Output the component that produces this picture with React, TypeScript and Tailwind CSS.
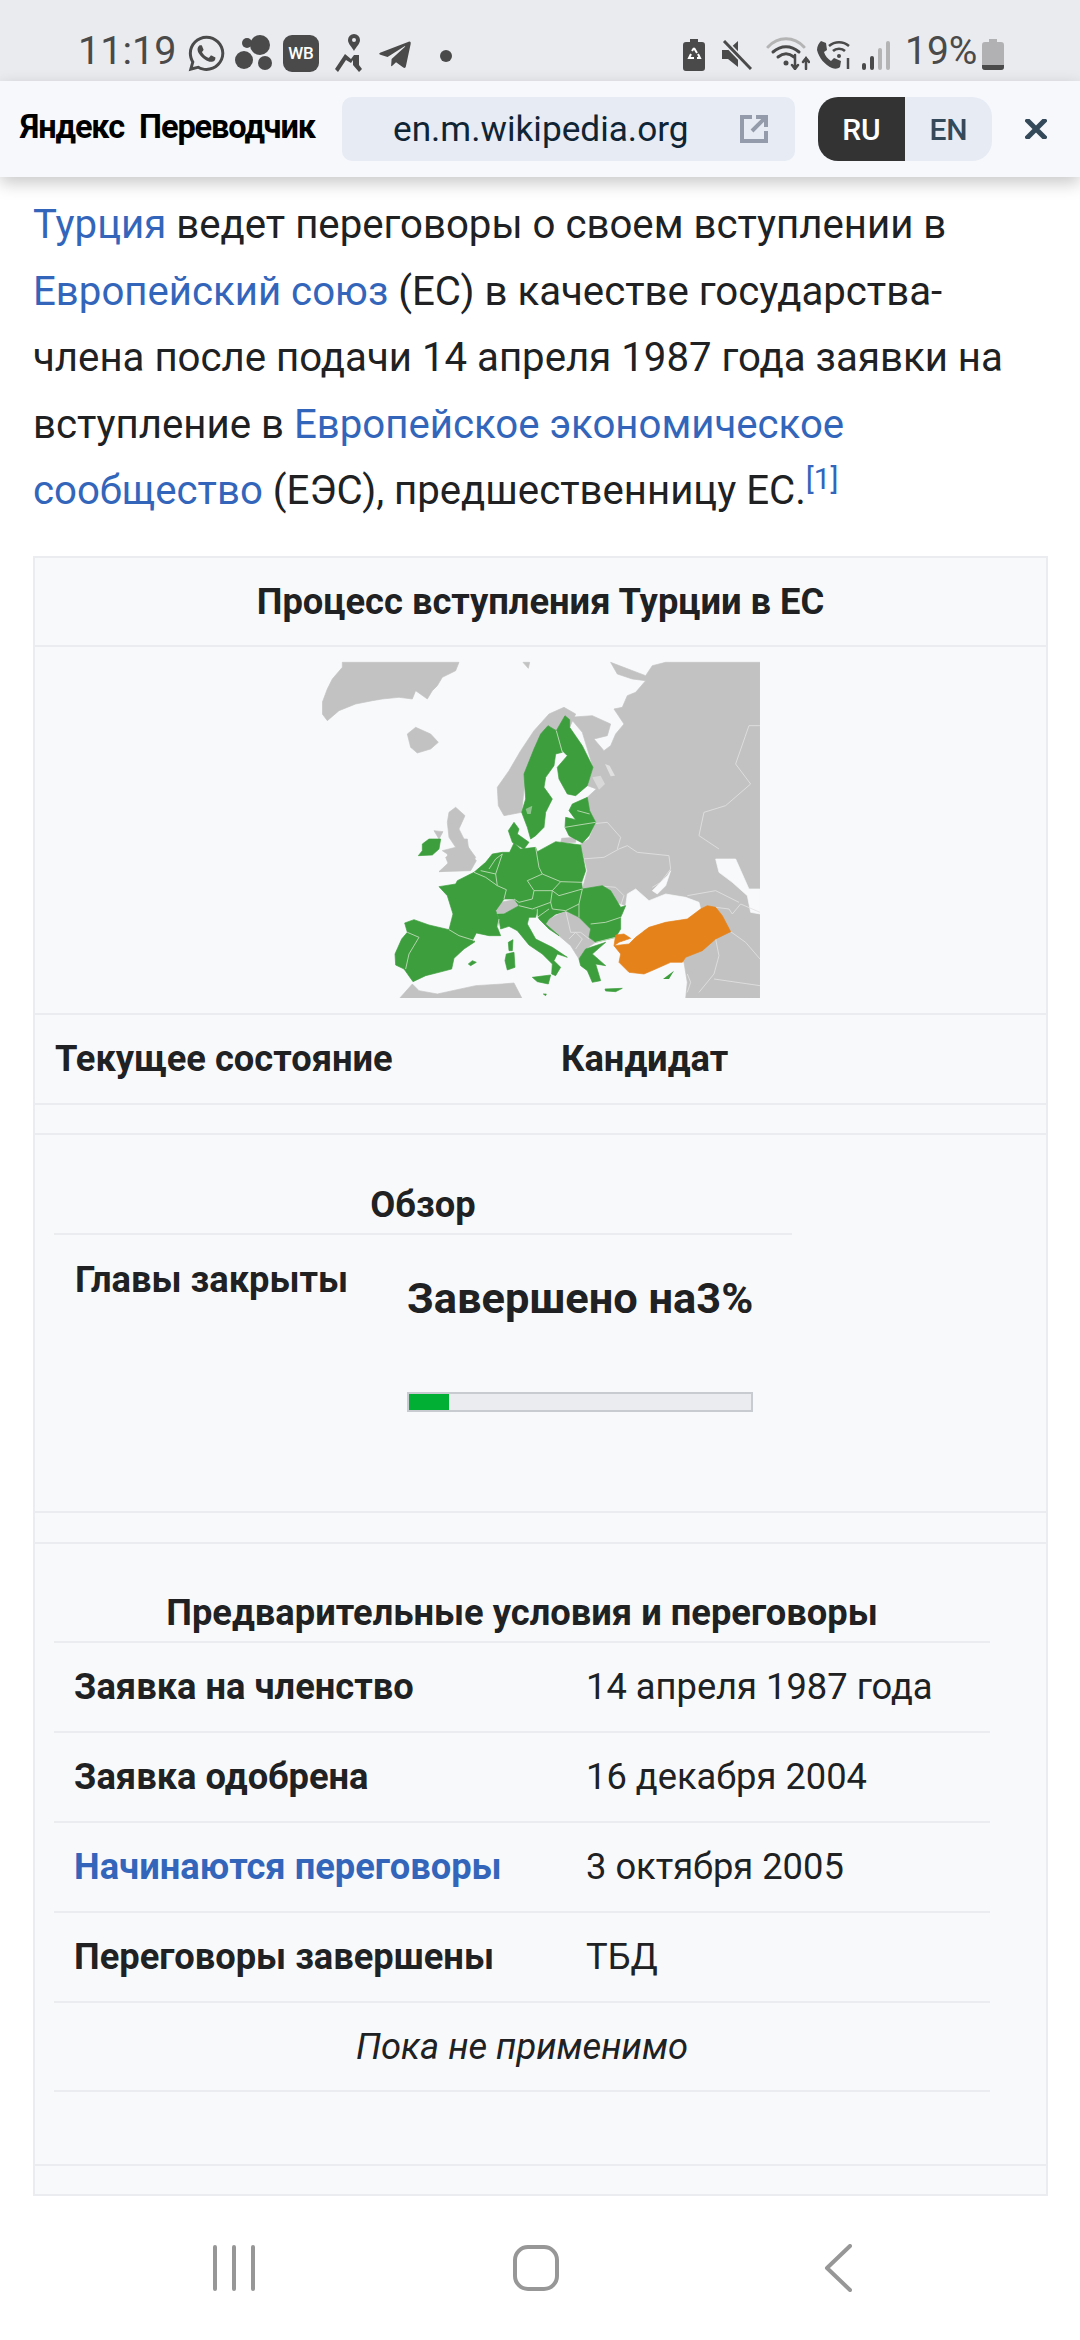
import { FaWhatsapp, FaTelegramPlane } from "react-icons/fa";

const SEA = "#f8f9fb";
const GRAY = "#c2c2c2";
const GREEN = "#3c9e3c";
const ORANGE = "#e5821a";

// outlines are written in the coordinates of the crop they were read from
const wholeLand = [
  "70,160 85,120 100,90 130,55 130,40 480,40 470,65 430,85 415,110 400,125 385,150 350,125 340,150 300,145 250,150 220,155 170,165 120,185 85,215 70,195",
  "325,255 350,235 395,255 418,280 395,300 355,312 335,295",
  "672,40 692,40 688,58",
  "935,40 955,75 1000,90 1040,95 1010,130 985,140 970,175 945,180 975,225 950,255 935,290 915,305 885,270 925,260 935,225 880,200 812,205 850,250 882,355 866,410 892,420 865,445 872,485 890,520 870,570 845,585 865,665 850,720 980,770 970,795 1100,900 1155,940 1165,1000 1160,1050 1383,1048 1383,40 1160,40 1100,40 1060,50 1040,80",
  "445,520 450,490 470,475 498,500 480,540 505,590 530,625 515,655 420,668 450,640 445,615 430,605 470,595 450,565",
  "405,545 432,548 420,570",
];

const eastLines = [
  "850,630 915,625 960,600 985,590 1015,610 1110,620 1115,660 1085,700 1060,715",
  "845,585 875,525 925,520 965,565 955,600",
  "1383,230 1350,230 1310,345 1355,405 1280,470 1215,490 1200,560 1260,600",
  "915,712 950,715 975,740 965,770",
];

const westLand = [
  "205,0 235,0 240,40 262,65 245,95 150,98 180,80 170,55 200,35",
  "315,215 335,190 375,182 390,200 345,225 325,222",
  "480,240 530,215 570,235 605,270 600,295 620,310 590,330 570,360 545,320 510,290 470,255",
  "30,480 70,435 90,455 145,465 260,440 340,435 375,432 400,480",
];

const westGreen = [
  "47,252 75,242 120,258 180,272 210,290 258,308 225,330 195,358 188,390 150,400 110,410 72,428 45,390 20,378 18,345 38,300 55,280",
  "150,143 200,135 205,125 255,100 290,115 325,140 352,152 345,180 320,215 330,240 325,265 335,290 300,290 262,282 250,305 210,290 180,272 192,225 175,170",
  "255,100 290,70 310,45 340,40 362,40 375,12 395,30 440,25 445,38 500,8 575,18 590,95 578,130 580,150 640,140 665,155 695,205 710,200 695,235 695,270 680,295 620,310 600,295 605,270 570,235 530,215 500,225 485,235 460,215 430,210 390,200 375,180 345,180 352,152 325,140 290,115",
  "330,240 325,225 345,225 390,200 430,210 445,215 440,235 420,235 415,255 440,300 490,325 535,355 505,345 495,365 515,385 500,410 488,405 490,375 460,345 420,318 385,275 360,262 335,270",
  "440,210 485,205 530,215 500,225 480,240 470,255 510,290 480,270 450,240",
  "570,360 590,330 650,310 610,345 650,380 620,375 635,425 610,430 595,395 575,380",
  "430,415 485,408 478,435 445,428",
  "352,345 375,340 378,385 355,393 348,365",
  "358,310 372,302 370,335 360,335",
  "238,375 250,365 262,370 245,380",
  "463,465 472,465 470,470",
  "648,450 700,448 680,458 650,456",
  "88,50 100,35 100,15 120,0 155,0 150,30 130,48",
];

const westLines = [
  "55,280 90,295 60,345 50,390",
  "180,272 210,290 258,305",
  "255,100 290,115 325,140 352,152 345,180",
  "275,95 320,105 325,140",
  "300,90 320,60 340,45",
  "320,105 340,45",
  "440,25 450,85 460,105 415,125 435,155",
  "460,105 515,128 490,155 435,155",
  "515,128 580,130",
  "490,155 510,170 580,150",
  "435,155 430,180 390,190 375,180",
  "390,200 430,210 485,190 490,155",
  "485,190 490,210 530,215 570,195 580,150",
  "570,235 570,195",
  "605,255 650,250 695,235",
  "620,310 680,295",
  "330,240 325,265",
  "445,210 445,235 480,210",
];

const balkanLines = [
  "530,215 545,280 575,280 600,300",
  "540,300 560,280 580,300 560,330",
];

const northLand = [
  "55,265 90,215 125,155 165,95 210,45 255,25 290,45 272,85 232,95 207,80 140,225 128,340 75,350 58,320",
  "248,418 290,415 290,430 245,432",
];

const northGreen = [
  "207,80 232,95 250,160 230,165 225,200 200,235 195,265 220,300 200,340 195,385 170,410 155,420 145,385 128,340 140,300 135,225 165,150 185,105",
  "258,50 272,62 272,85 310,140 342,205 325,260 290,290 265,285 240,240 235,205 265,170 250,155 232,95",
  "280,315 325,295 332,335 350,370 330,410 310,432 270,410 258,385 260,355 290,362 270,335",
  "88,395 105,370 120,390 115,405 150,430 135,450 100,430",
  "275,340 290,340 285,352",
];

const northLines = [
  "232,95 250,160",
  "258,385 300,378 350,370",
  "295,335 332,345",
];

const southSea = [
  "200,140 205,105 230,90 270,125 320,105 380,115 420,130 425,150 385,180 320,190 270,205 235,225 205,225 185,210 192,165",
  "280,95 325,50 335,35 320,80 295,105",
  "470,0 530,0 570,90 603,90 603,165 575,160 565,110 520,70 480,40",
];

const southLines = [
  "385,110 470,95 540,130",
  "470,145 510,150 520,165 545,135 603,160",
  "515,218 560,250 603,300",
  "470,240 480,290 465,345 420,400",
  "465,360 603,380",
  "385,345 395,370 385,400",
];

const turkey = [
  "445,140 470,145 490,170 515,218 470,240 430,275 380,295 370,310 335,310 290,330 255,345 210,340 180,310 185,285 165,260 210,255 230,235 270,205 320,190 385,180 425,150",
  "170,228 195,225 215,238 180,250 165,260",
];

function Shapes({ items, fill }: any) {
  return items.map((p: string) => (
    <polygon key={p} points={p} fill={fill} stroke={fill} strokeWidth="2" strokeLinejoin="round" />
  ));
}

function Lines({ items, color }: any) {
  return items.map((p: string) => (
    <polyline key={p} points={p} fill="none" stroke={color} strokeWidth="2.5" />
  ));
}

function EuropeMap() {
  return (
    <svg viewBox="323 662 438 337" className="w-[438px] h-[337px]">
      <defs>
        <clipPath id="frame">
          <rect x="323" y="662" width="438" height="337" />
        </clipPath>
      </defs>
      <g clipPath="url(#frame)">
        <g transform="translate(300 650) scale(0.3333)">
          <Shapes items={wholeLand} fill={GRAY} />
          <Lines items={eastLines} color="#e2e2e2" />
        </g>
        <g transform="translate(560 860) scale(0.3333)">
          <Shapes items={southSea} fill={SEA} />
          <Lines items={southLines} color="#e2e2e2" />
        </g>
        <g transform="translate(480 700) scale(0.3333)">
          <Shapes items={northLand} fill={GRAY} />
          <polygon points="340,235 365,230 378,255 360,272" fill="#d8d8d8" />
          <polygon points="378,195 392,200 408,230 395,232" fill="#e0e0e0" />
          <Shapes items={northGreen} fill={GREEN} />
          <Lines items={northLines} color="#c9e0c2" />
          <polygon points="140,330 160,320 155,345 145,345" fill="#8fc48f" />
        </g>
        <g transform="translate(390 840) scale(0.3333)">
          <Shapes items={westLand} fill={GRAY} />
          <Lines items={balkanLines} color="#e2e2e2" />
          <Shapes items={westGreen} fill={GREEN} />
          <Lines items={westLines} color="#c9e0c2" />
        </g>
        <g transform="translate(560 860) scale(0.3333)">
          <Shapes items={turkey} fill={ORANGE} />
          <polygon points="180,252 225,238 205,252" fill={SEA} />
          <polygon points="312,360 345,335 330,360" fill={GREEN} />
        </g>
      </g>
    </svg>
  );
}

function StatusBar() {
  return (
    <div className="relative z-10 h-[81px] bg-[#eaebef] text-[#4a4a4a] flex items-end pb-[7px] pl-[78px] pr-[76px] font-[Roboto,sans-serif]">
      <span className="text-[39.5px] leading-[46px] w-[111px]">11:19</span>
      <FaWhatsapp className="w-[35px] h-[37px] mb-[2px] scale-110" />
      <svg viewBox="0 0 37 37" className="ml-[11px] w-[37px] h-[37px] mb-[2px]" fill="currentColor">
        <circle cx="25" cy="10" r="10" />
        <circle cx="9" cy="25" r="9" />
        <circle cx="30" cy="28" r="7" />
        <circle cx="12" cy="8" r="5" />
      </svg>
      <div className="ml-[11px] w-[36px] h-[37px] mb-[2px] rounded-[9px] bg-[#4a4a4a] text-white text-[17px] font-medium leading-[37px] text-center">WB</div>
      <svg viewBox="0 0 27 38" className="ml-[16px] w-[27px] h-[38px] mb-[2px]" fill="currentColor">
        <path fillRule="evenodd" d="M19 0a6 6 0 0 1 6 6c0 4-4 7-6 11-2-4-6-7-6-11a6 6 0 0 1 6-6Zm0 4a2 2 0 1 0 0 4 2 2 0 0 0 0-4Z" />
        <path d="M10 20l6 5 3-4h5v10l3 4-3 3-6-7v-5l-2 3-5-3-8 12-3-3 8-12 2-3z" />
      </svg>
      <FaTelegramPlane className="ml-[13px] w-[40px] h-[36px] mb-[1px]" />
      <span className="ml-[25px] w-[12px] h-[12px] mb-[12px] rounded-full bg-[#4a4a4a]" />
      <div className="flex-1" />
      <svg viewBox="0 0 22 32" className="w-[22px] h-[32px] mb-[3px]">
        <path d="M7 0h8v3h4a3 3 0 0 1 3 3v23a3 3 0 0 1-3 3H3a3 3 0 0 1-3-3V6a3 3 0 0 1 3-3h4z" fill="#4a4a4a" />
        <path d="M11 9l3 5M8 15l-2 4h5M14 19h3l-2-4" fill="none" stroke="#fff" strokeWidth="2" />
        <path d="M9 12l2-3" stroke="#fff" strokeWidth="2" />
      </svg>
      <svg viewBox="0 0 30 30" className="ml-[17px] w-[30px] h-[30px] mb-[4px]" fill="#4a4a4a">
        <path d="M0 10h6l10-9v26L6 19H0z" />
        <path d="M2 1l27 28" stroke="#eaebef" strokeWidth="6" />
        <path d="M2 1l27 28" stroke="#4a4a4a" strokeWidth="3" />
      </svg>
      <svg viewBox="0 0 44 33" className="ml-[14px] w-[44px] h-[33px] mb-[4px]" fill="none" strokeLinecap="round">
        <path d="M2 10c10-11 26-11 36 0" stroke="#b4b4b4" strokeWidth="3" />
        <path d="M7 15c8-7 18-7 26 0M12 20c5-4 11-4 16 0" stroke="#4a4a4a" strokeWidth="3" />
        <circle cx="20" cy="26" r="2.5" fill="#4a4a4a" />
        <path d="M29 18v13M26 28l3 4 3-4M40 32V21M37 25l3-4 3 4" stroke="#4a4a4a" strokeWidth="2.5" />
      </svg>
      <svg viewBox="0 0 36 30" className="ml-[6px] w-[36px] h-[30px] mb-[4px]" fill="none">
        <path d="M5 1l5 2 1 7-3 2c1 4 4 7 7 9l3-3 7 3-1 6c-2 2-5 2-8 1C9 25 3 18 1 10c0-4 2-7 4-9z" fill="#4a4a4a" />
        <path d="M13 6c6-5 14-5 20 0M17 11c3-3 9-3 12 0" stroke="#4a4a4a" strokeWidth="2.5" />
        <circle cx="23" cy="16" r="2" fill="#4a4a4a" />
        <path d="M32 18v11" stroke="#4a4a4a" strokeWidth="2.5" />
      </svg>
      <div className="ml-[10px] w-[28px] h-[29px] mb-[4px] flex items-end gap-[4px]">
        <span className="w-[4px] h-[7px] bg-[#4a4a4a] rounded-sm" />
        <span className="w-[4px] h-[14px] bg-[#4a4a4a] rounded-sm" />
        <span className="w-[4px] h-[22px] bg-[#b4b4b4] rounded-sm" />
        <span className="w-[4px] h-[29px] bg-[#b4b4b4] rounded-sm" />
      </div>
      <span className="ml-[15px] text-[39px] leading-[46px] w-[77px]">19%</span>
      <svg viewBox="0 0 22 31" className="w-[22px] h-[31px] mb-[4px]">
        <path d="M7 0h8v3h4a3 3 0 0 1 3 3v22a3 3 0 0 1-3 3H3a3 3 0 0 1-3-3V6a3 3 0 0 1 3-3h4z" fill="#b1b1b3" />
        <path d="M0 26h22v2a3 3 0 0 1-3 3H3a3 3 0 0 1-3-3z" fill="#4a4a4a" />
      </svg>
    </div>
  );
}

function TranslateBar() {
  return (
    <div className="relative z-10 h-[96px] bg-[#f6f8fc] shadow-[0_6px_16px_rgba(0,0,0,0.22)] flex items-center pl-[20px] font-[Roboto,sans-serif]">
      <div className="w-[322px] text-[32.5px] font-bold text-black tracking-[-1.1px] [word-spacing:8px] leading-none whitespace-nowrap mb-[4px]">
        Яндекс Переводчик
      </div>
      <div className="w-[453px] h-[64px] rounded-[10px] bg-[#e6ebf4] flex items-center pl-[51px] text-[35.2px] text-[#0f2535]">
        <span className="w-[347px]">en.m.wikipedia.org</span>
        <svg viewBox="0 0 28 28" className="w-[28px] h-[28px]" fill="none" stroke="#949cab" strokeWidth="4">
          <path d="M12 2H2v24h24V16M16 2h10v10M26 2L12 16" />
        </svg>
      </div>
      <div className="ml-[23px] w-[174px] h-[64px] rounded-[20px] overflow-hidden flex text-[30px] font-medium">
        <div className="w-[87px] bg-[#333333] text-white flex items-center justify-center">RU</div>
        <div className="w-[87px] bg-[#e6ebf4] text-[#34495a] flex items-center justify-center">EN</div>
      </div>
      <svg viewBox="0 0 22 20" className="ml-[33px] w-[22px] h-[20px]" stroke="#34495a" strokeWidth="5">
        <path d="M1 0l20 20M21 0L1 20" />
      </svg>
    </div>
  );
}

function PreRow({ label, value, link }: any) {
  return (
    <div className="h-[90px] border-b-2 border-[#eaecf0] flex items-center pt-[2px]">
      <div className={`w-[532px] pl-[20px] font-bold ${link ? "text-[#3366bb]" : ""}`}>{label}</div>
      <div>{value}</div>
    </div>
  );
}

export default function App() {
  return (
    <div className="w-[1080px] h-[2340px] bg-white flex flex-col overflow-hidden font-[Roboto,sans-serif] text-[#202122]">
      <StatusBar />
      <TranslateBar />

      <div className="flex-1 px-[33px] pt-[15px]">
        <p className="text-[40.2px] leading-[66.5px] whitespace-nowrap">
          <span className="text-[#3366bb]">Турция</span> ведет переговоры о своем вступлении в
          <br />
          <span className="text-[#3366bb]">Европейский союз</span> (ЕС) в качестве государства-
          <br />
          члена после подачи 14 апреля 1987 года заявки на
          <br />
          вступление в <span className="text-[#3366bb]">Европейское экономическое</span>
          <br />
          <span className="text-[#3366bb]">сообщество</span> (ЕЭС), предшественницу ЕС.
          <sup className="text-[#3366bb] text-[30px] leading-none">[1]</sup>
        </p>

        <div className="mt-[31px] w-[1015px] border-2 border-[#eaecf0] bg-[#f8f9fb] text-[36.3px]">
          <div className="h-[89px] border-b-2 border-[#eaecf0] flex items-center justify-center font-bold pt-[2px]">
            Процесс вступления Турции в ЕС
          </div>
          <div className="h-[368px] border-b-2 border-[#eaecf0] flex items-center justify-center">
            <EuropeMap />
          </div>
          <div className="h-[90px] border-b-2 border-[#eaecf0] flex items-center font-bold pl-[20px] pt-[2px]">
            <div className="w-[506px]">Текущее состояние</div>
            <div>Кандидат</div>
          </div>
          <div className="h-[30px] border-b-2 border-[#eaecf0]" />

          <div className="h-[378px] border-b-2 border-[#eaecf0] pl-[19px] font-bold">
            <div className="w-[738px] h-[100px] border-b-2 border-[#eaecf0] flex items-end justify-center">
              Обзор
            </div>
            <div className="flex">
              <div className="w-[353px] pl-[21px] pt-[18px]">Главы закрыты</div>
              <div className="w-[346px] pt-[34px]">
                <div className="text-[43.4px] leading-[60px] whitespace-nowrap">Завершено на3%</div>
                <div className="mt-[63px] h-[20px] border-2 border-[#c8ccd1] bg-[#eaecf0]">
                  <div className="w-[40px] h-full bg-[#00af33]" />
                </div>
              </div>
            </div>
          </div>

          <div className="h-[31px] border-b-2 border-[#eaecf0]" />

          <div className="h-[622px] border-b-2 border-[#eaecf0] pl-[19px]">
            <div className="w-[936px]">
              <div className="h-[99px] border-b-2 border-[#eaecf0] flex items-end justify-center font-bold">
                Предварительные условия и переговоры
              </div>
              <PreRow label="Заявка на членство" value="14 апреля 1987 года" />
              <PreRow label="Заявка одобрена" value="16 декабря 2004" />
              <PreRow label="Начинаются переговоры" value="3 октября 2005" link />
              <PreRow label="Переговоры завершены" value="ТБД" />
              <div className="h-[89px] border-b-2 border-[#eaecf0] flex items-center justify-center italic pt-[2px]">
                Пока не применимо
              </div>
            </div>
          </div>
          <div className="h-[28px]" />
        </div>
      </div>

      <div className="h-[144px] bg-white flex items-center justify-center pr-[9px] shrink-0">
        <div className="w-[302px] flex justify-center">
          <svg viewBox="0 0 44 46" className="w-[44px] h-[46px]" stroke="#979797" strokeWidth="4" strokeLinecap="round">
            <path d="M3 2v42M22 2v42M41 2v42" />
          </svg>
        </div>
        <div className="w-[302px] flex justify-center">
          <svg viewBox="0 0 46 46" className="w-[46px] h-[46px]" fill="none" stroke="#979797" strokeWidth="4">
            <rect x="2" y="2" width="42" height="42" rx="13" />
          </svg>
        </div>
        <div className="w-[302px] flex justify-center">
          <svg viewBox="0 0 28 48" className="w-[28px] h-[48px]" fill="none" stroke="#979797" strokeWidth="4" strokeLinecap="round" strokeLinejoin="round">
            <path d="M26 2L3 24l23 22" />
          </svg>
        </div>
      </div>
    </div>
  );
}
